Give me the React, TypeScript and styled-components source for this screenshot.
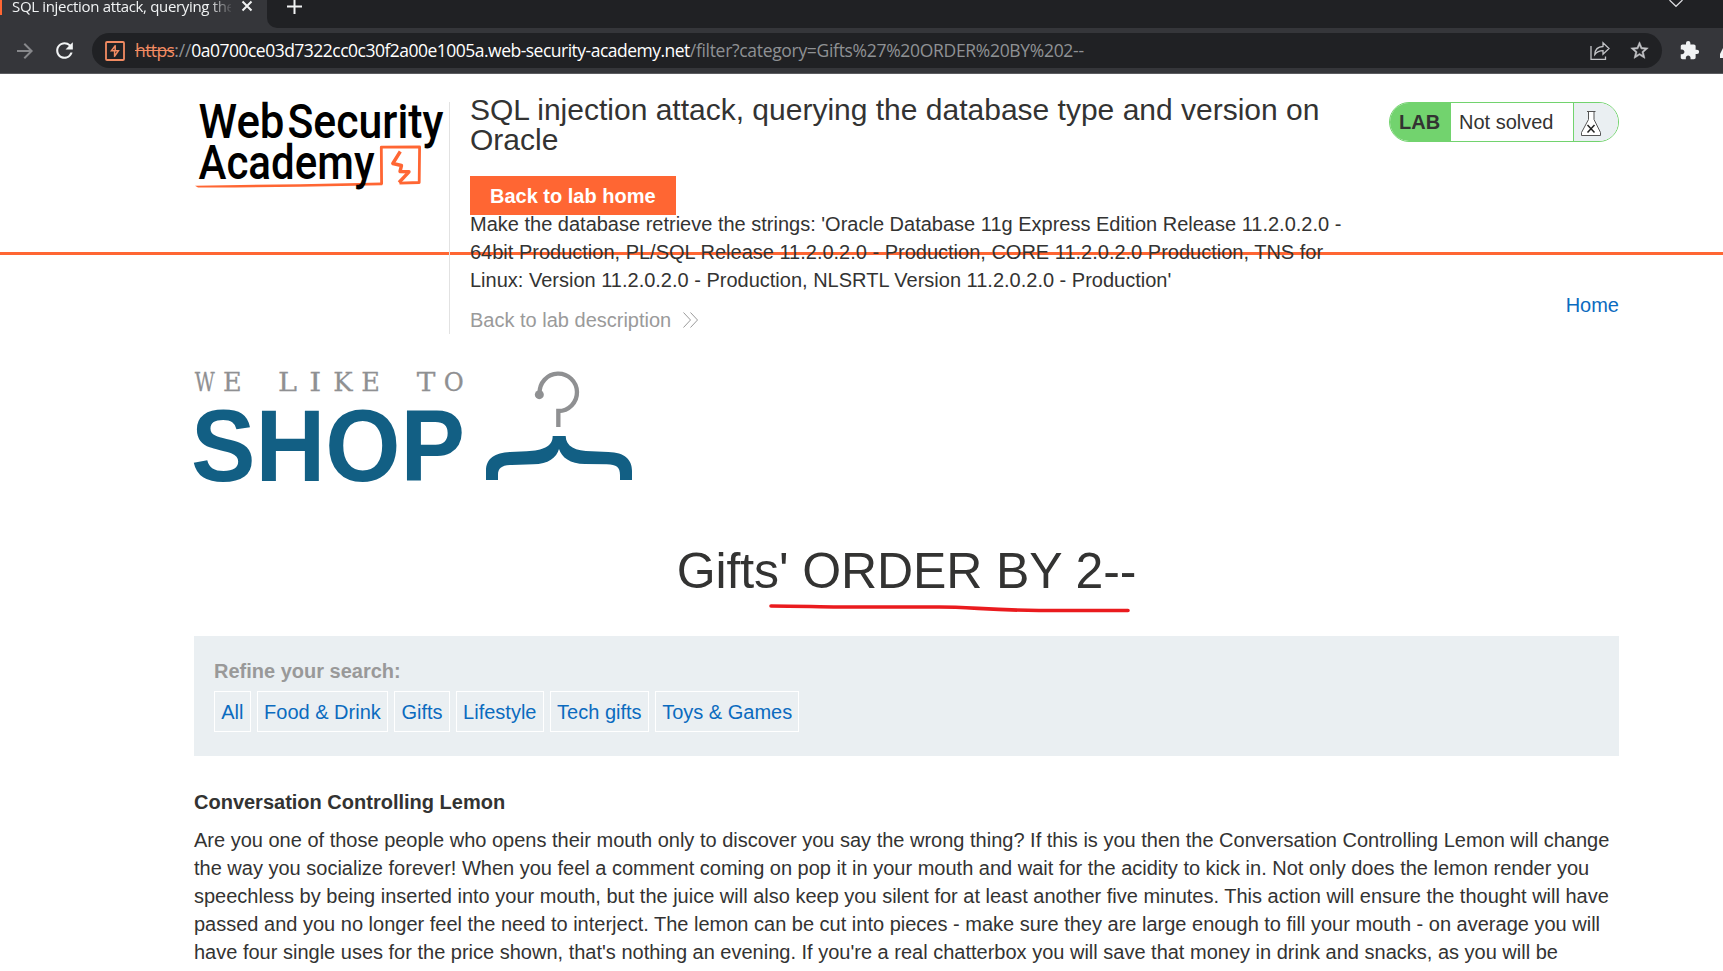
import React from "react";
import styled, { createGlobalStyle } from "styled-components";
import { MdArrowForward, MdRefresh, MdStarOutline, MdExtension } from "react-icons/md";

const GlobalStyle = createGlobalStyle`
  * { box-sizing: border-box; }
  html, body { margin: 0; padding: 0; background: #fff; }
  body {
    height: 971px;
    overflow: hidden;
    font-family: "Liberation Sans", Arial, sans-serif;
    font-size: 20px;
    line-height: 28px;
    color: #333332;
  }
  a { text-decoration: none; }
  svg { display: block; overflow: visible; }
`;

const Screen = styled.div`
  width: 1723px;
  height: 971px;
  overflow: hidden;
`;

/* Browser chrome */
const Chrome = styled.div`
  height: 74px;
  background: #35363a;
  border-bottom: 1px solid #5b5c60;
  font-family: "Open Sans", "Noto Sans", sans-serif;
`;

const TabStrip = styled.div`
  display: flex;
  height: 28px;
`;

const ActiveTab = styled.div`
  display: flex;
  width: 267px;
`;

const Favicon = styled.div`
  width: 2px;
  height: 15px;
  background: #ff6633;
`;

const TabTitle = styled.div`
  width: 219px;
  height: 28px;
  margin: -8px 0 0 10px;
  overflow: hidden;
  white-space: nowrap;
  font-size: 15px;
  letter-spacing: -0.33px;
  color: #f1f3f4;
  mask-image: linear-gradient(to right, #000 196px, transparent 222px);
`;

const TabClose = styled.svg`
  width: 12px;
  height: 12px;
  margin-left: 10px;
`;

const StripRest = styled.div`
  display: flex;
  flex: 1;
  justify-content: space-between;
  background: #202124;
  border-bottom-left-radius: 10px;
  padding: 0 40px 0 20px;
`;

const Toolbar = styled.div`
  display: flex;
  align-items: center;
  height: 45px;
  padding-left: 13px;
`;

const ToolIcon = styled.span<{ $color: string; $gap?: number }>`
  display: flex;
  flex: none;
  color: ${(p) => p.$color};
  margin-left: ${(p) => p.$gap ?? 0}px;
`;

const AddressBar = styled.div`
  display: flex;
  align-items: center;
  flex: none;
  width: 1570px;
  height: 35px;
  margin-left: 15px;
  padding: 0 12px 0 13px;
  border-radius: 18px;
  background: #202124;
`;

const Url = styled.div`
  flex: 1;
  margin-left: 10px;
  padding-bottom: 1px;
  font-size: 17.5px;
  white-space: nowrap;
  color: #8f9194;
`;

const Scheme = styled.span`
  color: #f28b62;
  text-decoration: line-through;
  letter-spacing: -0.6px;
`;
const Slashes = styled.span`
  letter-spacing: -0.15px;
`;
const Host = styled.span`
  color: #fff;
  letter-spacing: -0.51px;
`;
const Path = styled.span`
  letter-spacing: -0.31px;
`;

/* Lab banner */
const Banner = styled.header`
  display: flex;
  align-items: flex-start;
  height: 181px;
  padding: 28px 104px 0 194px;
  border-bottom: 3px solid #ff6633;
`;

const LogoCell = styled.div`
  width: 255px;
  flex: none;
`;

const LabInfo = styled.div`
  width: 902px;
  height: 232px;
  border-left: 1px solid #e2e2e2;
  padding-left: 20px;
`;

const LabTitle = styled.h2`
  margin: -7px 0 0;
  font-size: 30px;
  line-height: 30px;
  font-weight: 400;
`;

const HomeButton = styled.a`
  display: block;
  width: 206px;
  height: 39px;
  margin-top: 21px;
  padding: 0 20px;
  background: #ff6633;
  color: #fff;
  font-weight: 700;
  line-height: 40px;
  white-space: nowrap;
`;

const LabHint = styled.p`
  margin: -5px 0 0;
`;

const BackLink = styled.a`
  display: flex;
  align-items: center;
  gap: 12px;
  margin-top: 12px;
  color: #9a9a9a;
`;

const StatusBadge = styled.div`
  display: flex;
  width: 230px;
  height: 40px;
  margin-left: 38px;
  border: 1px solid #72d36e;
  border-radius: 20px;
  overflow: hidden;
  line-height: 38px;
  white-space: nowrap;
`;

const StatusLabel = styled.span`
  width: 61px;
  padding-left: 9px;
  background: #72d36e;
  font-weight: 700;
`;

const StatusText = styled.span`
  width: 122px;
  padding-left: 8px;
`;

const StatusIcon = styled.span`
  flex: 1;
  padding: 7px 0 0 6px;
  background: #eaeff2;
  border-left: 1px solid #72d36e;
`;

/* Shop page */
const Content = styled.main`
  margin-left: 194px;
  width: 1425px;
`;

const Nav = styled.nav`
  display: flex;
  justify-content: flex-end;
  padding-top: 36px;
`;

const Link = styled.a`
  color: #0b6bbf;
`;

const ShopLogo = styled.svg`
  width: 440px;
  height: 114px;
  margin-top: 51px;
`;

const Heading = styled.div`
  display: flex;
  flex-direction: column;
  align-items: center;
  height: 152px;
  padding-top: 52px;
`;

const HeadingText = styled.h1`
  margin: 0;
  font-size: 50px;
  line-height: 70px;
  font-weight: 400;
  letter-spacing: -0.1px;
`;

const Underline = styled.svg`
  width: 362px;
  height: 12px;
  margin-left: 86px;
  margin-top: -4px;
`;

const Filters = styled.section`
  height: 120px;
  padding: 21px 20px;
  background: #eaeff2;
`;

const FilterLabel = styled.div`
  font-weight: 700;
  color: #999999;
`;

const FilterList = styled.div`
  display: flex;
  gap: 6.1px;
  margin-top: 6px;
`;

const FilterLink = styled(Link)`
  height: 41px;
  padding: 0 6.25px;
  border: 1px solid #fff;
  line-height: 40px;
  white-space: nowrap;
`;

const ProductTitle = styled.h3`
  margin: 32px 0 10px;
  font-size: 20px;
  line-height: 28px;
  font-weight: 700;
`;

const Description = styled.p`
  margin: 0;
  white-space: nowrap;
`;

const categories = ["All", "Food & Drink", "Gifts", "Lifestyle", "Tech gifts", "Toys & Games"];

const descriptionLines = [
  "Are you one of those people who opens their mouth only to discover you say the wrong thing? If this is you then the Conversation Controlling Lemon will change",
  "the way you socialize forever! When you feel a comment coming on pop it in your mouth and wait for the acidity to kick in. Not only does the lemon render you",
  "speechless by being inserted into your mouth, but the juice will also keep you silent for at least another five minutes. This action will ensure the thought will have",
  "passed and you no longer feel the need to interject. The lemon can be cut into pieces - make sure they are large enough to fill your mouth - on average you will",
  "have four single uses for the price shown, that's nothing an evening. If you're a real chatterbox you will save that money in drink and snacks, as you will be",
];

/* x position and width of each letter in the typewriter line of the shop logo */
const typewriter = [
  { c: "W", x: 44, w: 60 },
  { c: "E", x: 129, w: 56 },
  { c: "L", x: 294, w: 57 },
  { c: "I", x: 388, w: 36 },
  { c: "K", x: 460, w: 58 },
  { c: "E", x: 544, w: 56 },
  { c: "T", x: 710, w: 56 },
  { c: "O", x: 791, w: 60 },
];

function AcademyLogo() {
  return (
    <svg width="255" height="92" viewBox="194 102 255 92">
      <g fontFamily="Roboto, sans-serif" fontSize="48.5" fontWeight="500" fill="#000">
        <text x="198.5" y="138" textLength="86" lengthAdjust="spacingAndGlyphs">Web</text>
        <text x="287.5" y="138" textLength="156" lengthAdjust="spacingAndGlyphs">Security</text>
      </g>
      <g fill="none" stroke="#ff6633" strokeLinejoin="round">
        <path d="M381.6 184.5L381.3 147.2L419.6 146.9L419.2 182.5L399.5 183.2" strokeWidth="2.8" />
        <path d="M400.3 151.5L392.8 163.5L401.5 165.5L400 171.5L409 171.8L399 182.5" strokeWidth="3.4" />
      </g>
      <path d="M195 185.7L300 184.2L382 182.6L382.3 185.3L300 186.7L235 187.6L198 187.4Z" fill="#ff6633" />
      <text x="198.5" y="179" fontFamily="Roboto, sans-serif" fontSize="48.5" fontWeight="500" textLength="176" lengthAdjust="spacingAndGlyphs">Academy</text>
    </svg>
  );
}

function Flask() {
  return (
    <svg width="22" height="27" viewBox="0 0 22 27" fill="none" stroke="#555" strokeWidth="1">
      <path d="M7 1.5H15.5M8.5 1.5V9.5L1.5 22.5V25.5H20.5V22.5L14 9.5V1.5" fill="#fff" />
      <path d="M7.5 15L14.5 22.5M14.5 15L7.5 22.5" stroke="#222" strokeWidth="1.5" />
    </svg>
  );
}

function WeLikeToShop() {
  return (
    <ShopLogo viewBox="42 60 1320 342">
      <g fontFamily="DejaVu Serif, serif" fontSize="78" fill="#8f9092" stroke="#8f9092" strokeWidth="0.8">
        {typewriter.map((l) => (
          <text key={l.x} x={l.x} y="123" textLength={l.w} lengthAdjust="spacingAndGlyphs">{l.c}</text>
        ))}
      </g>
      <text x="33" y="393" fontFamily="Liberation Sans, Arial, sans-serif" fontWeight="700" fontSize="305" fill="#125f84" textLength="822" lengthAdjust="spacingAndGlyphs">SHOP</text>
      <path d="M1079 130A56 56 0 1 1 1135 183V231" fill="none" stroke="#8f9092" strokeWidth="13" />
      <circle cx="1078" cy="134" r="13.5" fill="#8f9092" />
      <path
        d="M918 390V362C918 325 945 308 990 306L1040 304C1090 301 1118 290 1118 258H1157C1158 290 1185 303 1235 304L1285 306C1335 307 1356 330 1356 362V390H1320V375C1320 352 1310 344 1280 343L1215 342C1170 342 1145 322 1137 297C1130 322 1105 343 1060 343L995 345C965 346 954 354 954 375V390Z"
        fill="#125f84"
      />
    </ShopLogo>
  );
}

export default function App() {
  return (
    <Screen>
      <GlobalStyle />
      <Chrome>
        <TabStrip>
          <ActiveTab>
            <Favicon />
            <TabTitle>SQL injection attack, querying the</TabTitle>
            <TabClose viewBox="0 0 12 12">
              <path d="M1.5 1.5L10.5 10.5M10.5 1.5L1.5 10.5" stroke="#f1f3f4" strokeWidth="2" />
            </TabClose>
          </ActiveTab>
          <StripRest>
            <svg width="15" height="15" viewBox="0 0 15 15">
              <path d="M7.5 0V14M0 6.5H15" stroke="#f1f3f4" strokeWidth="2" />
            </svg>
            <svg width="14" height="8" viewBox="0 0 14 8">
              <path d="M0.5 0L7 6.3L13.5 0" fill="none" stroke="#dcdde0" strokeWidth="1.2" />
            </svg>
          </StripRest>
        </TabStrip>
        <Toolbar>
          <ToolIcon $color="#87888b"><MdArrowForward size={24} /></ToolIcon>
          <ToolIcon $color="#f1f3f4" $gap={15}><MdRefresh size={25} /></ToolIcon>
          <AddressBar>
            <svg width="20" height="20" viewBox="0 0 20 20" fill="none" stroke="#f28b62">
              <rect x="1" y="1" width="18" height="18" rx="1" strokeWidth="1.8" />
              <path d="M10.6 4.2L6.4 9.8H13.4L9.2 15.8M10.2 5V9.8M9.6 10V15.2" strokeWidth="1.5" />
            </svg>
            <Url>
              <Scheme>https</Scheme>
              <Slashes>://</Slashes>
              <Host>0a0700ce03d7322cc0c30f2a00e1005a.web-security-academy.net</Host>
              <Path>/filter?category=Gifts%27%20ORDER%20BY%202--</Path>
            </Url>
            <svg width="20" height="20" viewBox="0 0 20 20" fill="none" stroke="#c3c4c7" strokeWidth="1.3">
              <path d="M1 5V18.3H15.5V15.5" />
              <path d="M4.8 13.5C5 8.5 8 5.7 13 5.5V1.8L19 7.6L13 13.2V9.6C9.5 9.6 7 10.6 4.8 13.5Z" />
            </svg>
            <ToolIcon $color="#c3c4c7" $gap={19}>
              <MdStarOutline size={21} stroke="currentColor" strokeWidth={0.6} />
            </ToolIcon>
          </AddressBar>
          <ToolIcon $color="#f1f3f4" $gap={17}><MdExtension size={21} /></ToolIcon>
          <ToolIcon $color="#f1f3f4" $gap={20}>
            <svg width="3" height="16" viewBox="0 0 3 16"><path d="M3 5V15H0V11Z" fill="currentColor" /></svg>
          </ToolIcon>
        </Toolbar>
      </Chrome>

      <Banner>
        <LogoCell><AcademyLogo /></LogoCell>
        <LabInfo>
          <LabTitle>SQL injection attack, querying the database type and version on<br />Oracle</LabTitle>
          <HomeButton>Back to lab home</HomeButton>
          <LabHint>
            Make the database retrieve the strings: 'Oracle Database 11g Express Edition Release 11.2.0.2.0 -<br />
            64bit Production, PL/SQL Release 11.2.0.2.0 - Production, CORE 11.2.0.2.0 Production, TNS for<br />
            Linux: Version 11.2.0.2.0 - Production, NLSRTL Version 11.2.0.2.0 - Production'
          </LabHint>
          <BackLink>
            Back to lab description
            <svg width="15" height="16" viewBox="0 0 15 16" fill="none" stroke="#9a9a9a" strokeWidth="1">
              <path d="M0.5 0.5L7.5 8L0.5 15.5M7.5 0.5L14.5 8L7.5 15.5" />
            </svg>
          </BackLink>
        </LabInfo>
        <StatusBadge>
          <StatusLabel>LAB</StatusLabel>
          <StatusText>Not solved</StatusText>
          <StatusIcon><Flask /></StatusIcon>
        </StatusBadge>
      </Banner>

      <Content>
        <Nav><Link>Home</Link></Nav>
        <WeLikeToShop />
        <Heading>
          <HeadingText>Gifts' ORDER BY 2--</HeadingText>
          <Underline viewBox="0 0 362 12">
            <path d="M2 4C30 4 50 5 70 5H170C200 5 220 8 270 8.5H359" fill="none" stroke="#ea1b1e" strokeWidth="3.6" strokeLinecap="round" />
          </Underline>
        </Heading>
        <Filters>
          <FilterLabel>Refine your search:</FilterLabel>
          <FilterList>
            {categories.map((name) => <FilterLink key={name}>{name}</FilterLink>)}
          </FilterList>
        </Filters>
        <ProductTitle>Conversation Controlling Lemon</ProductTitle>
        <Description>
          {descriptionLines.map((line) => <React.Fragment key={line}>{line}<br /></React.Fragment>)}
        </Description>
      </Content>
    </Screen>
  );
}
